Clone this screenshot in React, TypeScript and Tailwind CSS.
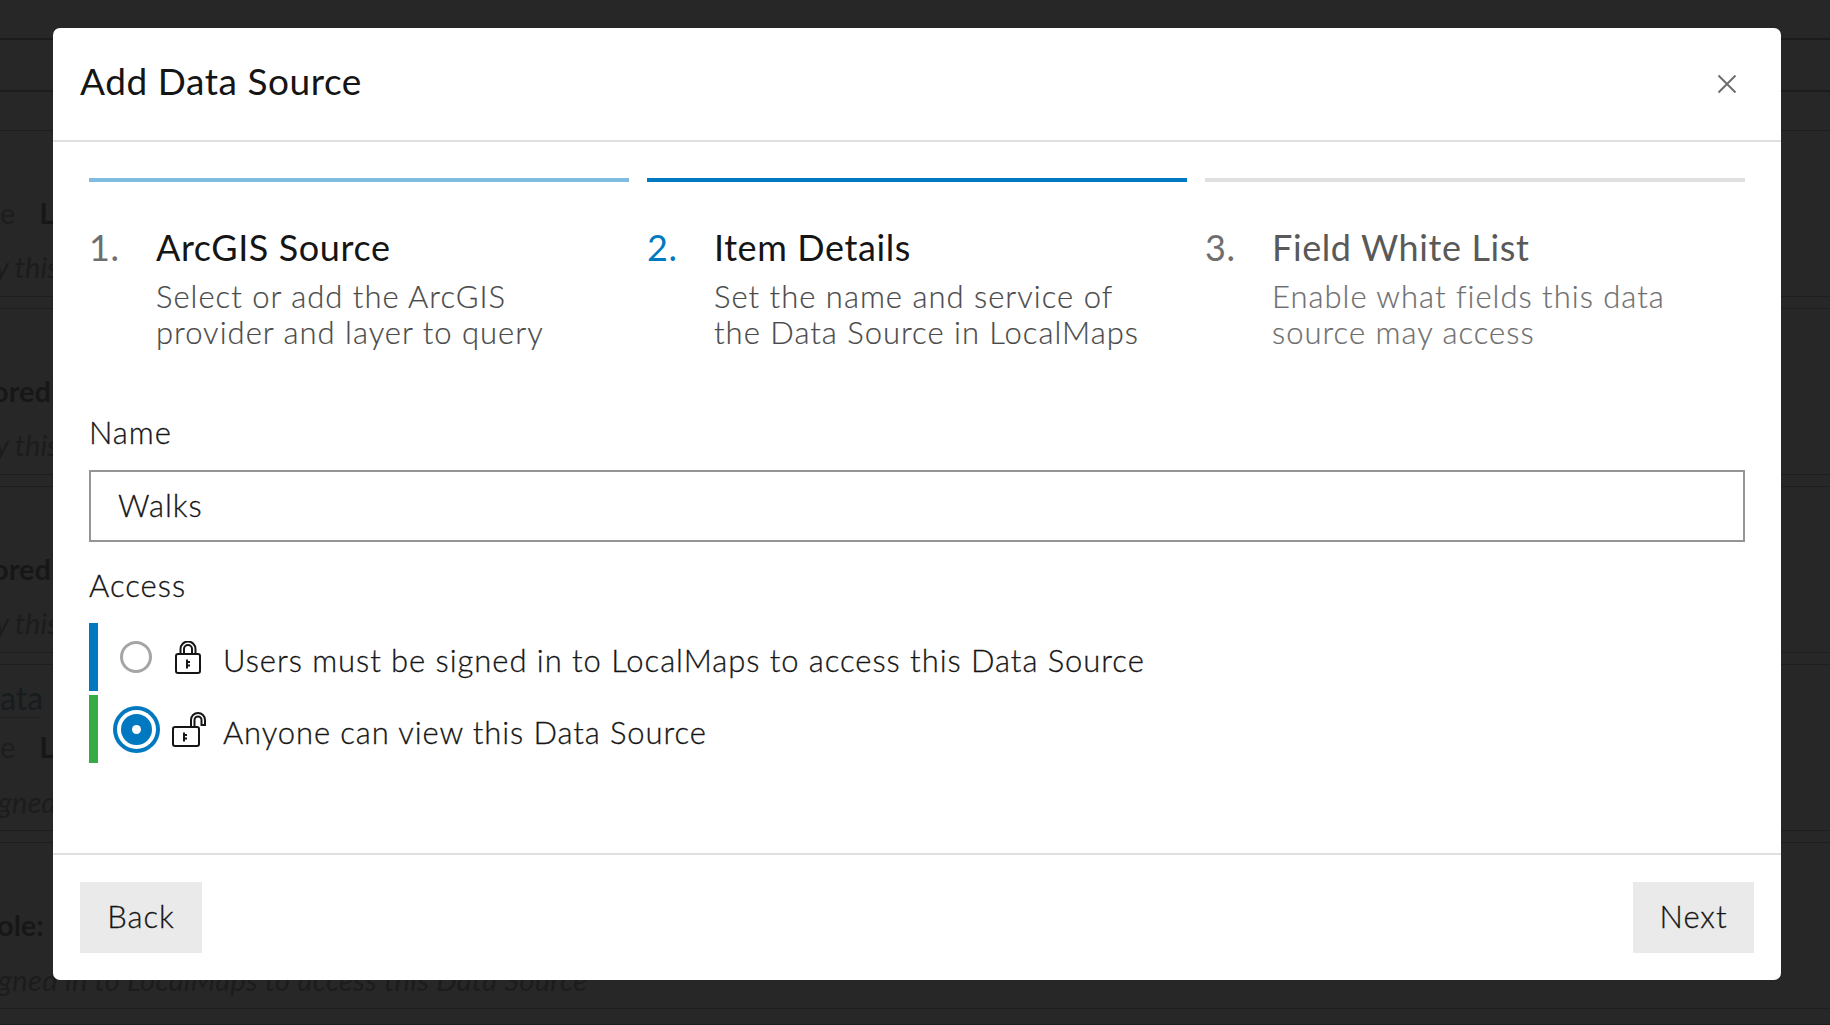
import React from "react";

const font = { fontFamily: '"Lato", "Noto Sans", sans-serif' };

function Lock() {
  return (
    <svg width="26" height="33" viewBox="0 0 26 33" fill="none" stroke="#151515" strokeWidth="2" className="ml-px">
      <rect x="1" y="13" width="24" height="19" rx="2" />
      <path d="M5.500 13V8a7.500 7.500 0 0 1 15 0v5" />
      <path d="M9 13V8a4 4 0 0 1 8 0v5" />
      <path d="M12 18.500v9M12 21h3M12 24.500h3" />
    </svg>
  );
}

function Unlock() {
  return (
    <svg width="34" height="35" viewBox="0 0 34 35" fill="none" stroke="#151515" strokeWidth="2" className="-ml-[2px]">
      <rect x="1" y="15" width="26" height="19" rx="2" />
      <path d="M19 15V8a7 7 0 0 1 14 0v5h-3.500V8a3.500 3.500 0 0 0-7 0v7" />
      <path d="M12 20.500v9M12 23h3M12 26.500h3" />
    </svg>
  );
}

function Step({ n, title, sub, numClass, titleClass, subClass }: { n: string; title: string; sub: string[]; numClass: string; titleClass: string; subClass: string }) {
  return (
    <div className="flex">
      <div className={`w-[67px] shrink-0 text-[36px] leading-[44px] tracking-[0.6px] ${numClass}`}>{n}</div>
      <div>
        <div className={`text-[36px] leading-[44px] tracking-[0.6px] ${titleClass}`}>{title}</div>
        <div className={`mt-[9px] text-[31px] font-light leading-[36px] tracking-[1px] [-webkit-text-stroke:0.2px_currentColor] ${subClass}`}>
          {sub.map((s) => (
            <div key={s}>{s}</div>
          ))}
        </div>
      </div>
    </div>
  );
}

function Card({ children }: { children: React.ReactNode }) {
  return <div className="relative mb-[11px] h-[167px] overflow-hidden border-y border-[#1e1e1e]">{children}</div>;
}

export default function App() {
  return (
    <div className="relative h-[1025px] w-[1830px] overflow-hidden bg-[#272727]" style={font}>
      {/* dimmed page behind the dialog */}
      <div className="flex flex-col text-[29px] text-[#171717]">
        <div className="h-[40px] border-b-2 border-[#1c1c1c]" />
        <div className="h-[52px] border-b-2 border-[#1c1c1c]" />
        <div className="h-[38px]" />
        <Card>
          <div className="mt-[64px] flex h-[36px] items-center leading-[36px]">
            <span className="text-[#1d1d1d]">e</span>
            <span className="ml-[24px] font-bold">L</span>
          </div>
          <div className="mt-[18px] -ml-[5px] italic leading-[36px] text-[#1c1c1c]">y this</div>
        </Card>
        <Card>
          <div className="mt-[64px] -ml-[8px] font-bold leading-[36px]">ored</div>
          <div className="mt-[18px] -ml-[5px] italic leading-[36px] text-[#1c1c1c]">y this</div>
        </Card>
        <Card>
          <div className="mt-[64px] -ml-[8px] font-bold leading-[36px]">ored</div>
          <div className="mt-[18px] -ml-[5px] italic leading-[36px] text-[#1c1c1c]">y this</div>
        </Card>
        <Card>
          <div className="mt-[14px] w-[42px] border-b border-[#1c2224] text-[32px] leading-[38px] text-[#171d1f]">ata</div>
          <div className="mt-[11px] flex h-[36px] items-center leading-[36px]">
            <span className="text-[#1d1d1d]">e</span>
            <span className="ml-[24px] font-bold">L</span>
          </div>
          <div className="mt-[19px] -ml-[2px] italic leading-[36px] text-[#1c1c1c]">gned</div>
        </Card>
        <Card>
          <div className="mt-[64px] -ml-[3px] font-bold leading-[36px]">ole:</div>
          <div className="mt-[19px] -ml-[2px] italic leading-[36px] tracking-[0.3px] text-[#1c1c1c]">gned in to LocalMaps to access this Data Source</div>
        </Card>
        <div className="h-[5px] border-b border-[#1e1e1e]" />
      </div>

      {/* dialog */}
      <div className="absolute left-[53px] top-[28px] flex h-[952px] w-[1728px] flex-col rounded-[7px] bg-white text-[#151515]">
        <header className="flex h-[114px] shrink-0 items-start justify-between border-b-2 border-[#e0e0e0] pl-[27px] pr-[44px]">
          <h1 className="mt-[29px] text-[37px] leading-[48px] tracking-[0.55px]">Add Data Source</h1>
          <svg width="20" height="20" viewBox="0 0 20 20" fill="none" stroke="#6e6e6e" strokeWidth="2" className="mt-[46px]">
            <path d="M1.500 1.500l17 17M18.500 1.500l-17 17" />
          </svg>
        </header>

        <main className="flex-1 px-[36px] pt-[36px]">
          <div className="grid grid-cols-3 gap-[18px]">
            <div className="h-[4px] bg-[#7fbce0]" />
            <div className="h-[4px] bg-[#0079c1]" />
            <div className="h-[4px] bg-[#e0e0e0]" />
          </div>
          <div className="mt-[43px] grid grid-cols-3 gap-[18px]">
            <Step n="1." title="ArcGIS Source" sub={["Select or add the ArcGIS", "provider and layer to query"]} numClass="text-[#6e6e6e]" titleClass="text-[#151515]" subClass="text-[#4a4a4a]" />
            <Step n="2." title="Item Details" sub={["Set the name and service of", "the Data Source in LocalMaps"]} numClass="text-[#0079c1]" titleClass="text-[#151515]" subClass="text-[#4a4a4a]" />
            <Step n="3." title="Field White List" sub={["Enable what fields this data", "source may access"]} numClass="text-[#6e6e6e]" titleClass="text-[#595959]" subClass="text-[#6e6e6e]" />
          </div>

          <div className="mt-[63px] text-[31px] font-light leading-[38px] tracking-[1px] [-webkit-text-stroke:0.3px_#151515]">Name</div>
          <div className="mt-[19px] flex h-[72px] items-center border-2 border-[#959595] pb-[2px] pl-[27px] text-[31px] font-light tracking-[1px] [-webkit-text-stroke:0.3px_#151515]">Walks</div>

          <div className="mt-[24px] text-[31px] font-light leading-[38px] tracking-[1px] [-webkit-text-stroke:0.3px_#151515]">Access</div>
          <div className="mt-[19px] flex flex-col gap-[4px]">
            <div className="flex h-[68px]">
              <div className="w-[9px] bg-[#0079c1]" />
              <div className="flex w-[76px] items-center justify-center">
                <div className="h-[32px] w-[32px] rounded-full border-[3px] border-[#a5a5a5] bg-white" />
              </div>
              <div className="flex w-[49px] items-center"><Lock /></div>
              <div className="pt-[3px] text-[31px] font-light leading-[68px] tracking-[0.95px] [-webkit-text-stroke:0.3px_#151515]">Users must be signed in to LocalMaps to access this Data Source</div>
            </div>
            <div className="flex h-[68px]">
              <div className="w-[9px] bg-[#35ac46]" />
              <div className="flex w-[76px] items-center justify-center">
                <div className="flex h-[31px] w-[31px] items-center justify-center rounded-full bg-[#0079c1] shadow-[0_0_0_4px_#fff,0_0_0_8px_#0079c1]">
                  <div className="h-[9px] w-[9px] rounded-full bg-white" />
                </div>
              </div>
              <div className="flex w-[49px] items-center"><Unlock /></div>
              <div className="pt-[3px] text-[31px] font-light leading-[68px] tracking-[0.9px] [-webkit-text-stroke:0.3px_#151515]">Anyone can view this Data Source</div>
            </div>
          </div>
        </main>

        <footer className="flex h-[127px] shrink-0 items-center justify-between border-t-2 border-[#e0e0e0] px-[27px]">
          <button className="h-[71px] w-[122px] bg-[#eaeaea] pb-[3px] text-[31px] font-light tracking-[1px] text-[#151515] [-webkit-text-stroke:0.3px_#151515]">Back</button>
          <button className="h-[71px] w-[121px] bg-[#eaeaea] pb-[3px] text-[31px] font-light tracking-[1px] text-[#151515] [-webkit-text-stroke:0.3px_#151515]">Next</button>
        </footer>
      </div>
    </div>
  );
}
